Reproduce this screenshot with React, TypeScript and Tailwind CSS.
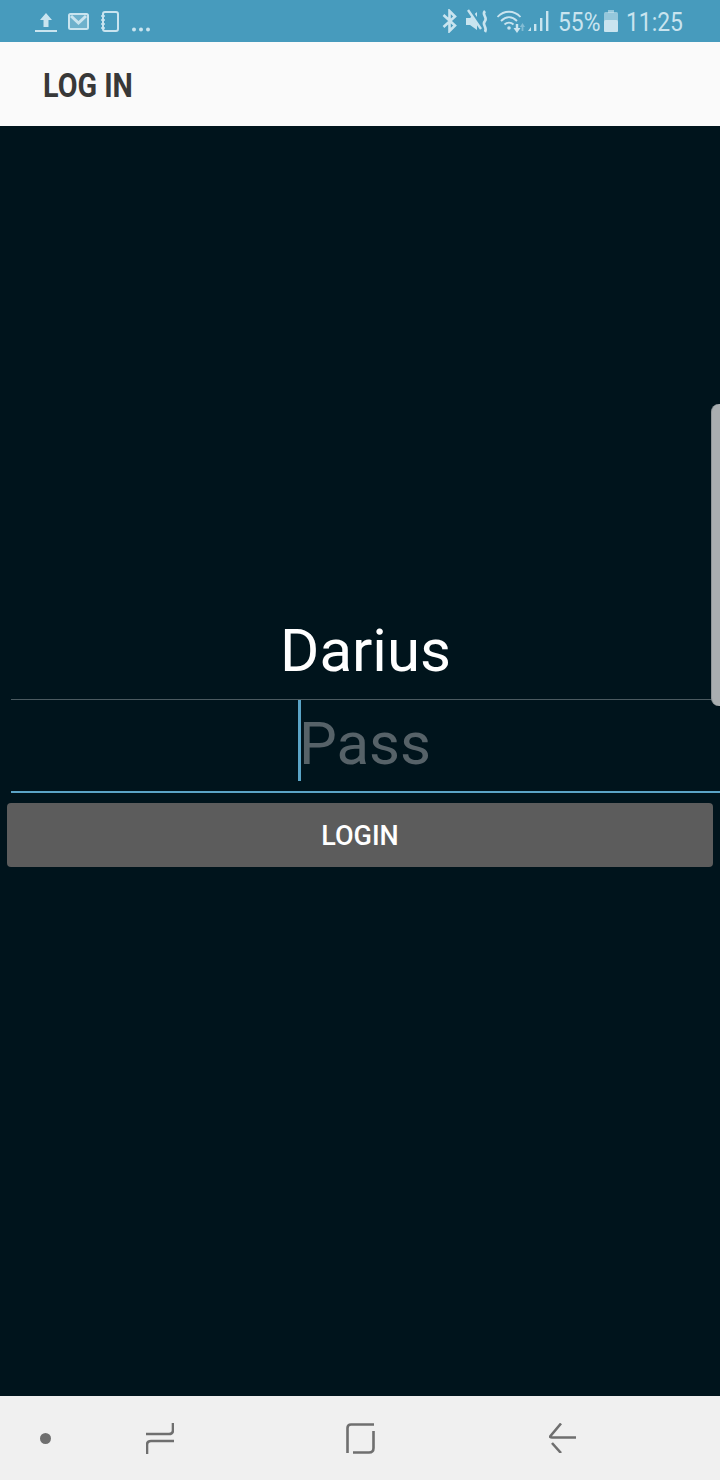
const statusColor = '#c9e4ef';

function UploadIcon() {
  return (
    <svg width="22" height="20" viewBox="0 0 22 20" className="mr-[11px] mt-[1px]">
      <path d="M11 1 L17 8 H13.500 V15 H8.500 V8 H5 Z" fill={statusColor} />
      <rect x="0" y="18" width="22" height="2" fill={statusColor} />
    </svg>
  );
}

function MailIcon() {
  return (
    <svg width="21" height="17" viewBox="0 0 21 17" className="mr-[12px]">
      <rect x="1" y="1" width="19" height="15" rx="1.500" fill={statusColor} fillOpacity="0.3" stroke={statusColor} strokeWidth="2" />
      <path d="M3 3 L10.500 10 L18 3" fill="none" stroke={statusColor} strokeWidth="3" />
    </svg>
  );
}

function NotebookIcon() {
  return (
    <svg width="18" height="21" viewBox="0 0 18 21" className="mr-[13px]">
      <rect x="2" y="1" width="15" height="19" rx="2" fill="none" stroke={statusColor} strokeWidth="2" />
      <path d="M0 5 H4 M0 9 H4 M0 13 H4 M0 17 H4" stroke={statusColor} strokeWidth="1.600" />
    </svg>
  );
}

function DotsIcon() {
  return (
    <svg width="18" height="5" viewBox="0 0 18 5" className="mt-[16px]">
      <circle cx="2" cy="2.500" r="2" fill={statusColor} />
      <circle cx="9" cy="2.500" r="2" fill={statusColor} />
      <circle cx="16" cy="2.500" r="2" fill={statusColor} />
    </svg>
  );
}

function BluetoothIcon() {
  return (
    <svg width="15" height="24" viewBox="0 0 15 24" className="mr-[9px]">
      <path d="M1.500 6 L13 16.500 L7.500 22 V2 L13 7.500 L1.500 18" fill="none" stroke={statusColor} strokeWidth="2.600" />
    </svg>
  );
}

function MuteIcon() {
  return (
    <svg width="23" height="24" viewBox="0 0 23 24" className="mr-[8px]">
      <path d="M0 9 H4 L11 3 V21 L4 16 H0 Z" fill={statusColor} />
      <path d="M3 0 L16 19" stroke="#479bbd" strokeWidth="4" />
      <path d="M2 1 L15 20" stroke={statusColor} strokeWidth="2.400" />
      <path d="M19 2 C15 6 22 8 19 12 C15 16 22 18 19 23" fill="none" stroke={statusColor} strokeWidth="2.600" />
    </svg>
  );
}

function WifiIcon() {
  return (
    <svg width="28" height="24" viewBox="0 0 28 24" className="mr-[3px]">
      <path d="M0.500 8 C7 1 17 1 23.500 8" fill="none" stroke={statusColor} strokeWidth="1.800" />
      <path d="M4 12 C9 7 15 7 20 12" fill="none" stroke={statusColor} strokeWidth="1.800" />
      <path d="M7.500 15.500 C10 13 14 13 16.500 15.500" fill="none" stroke={statusColor} strokeWidth="1.800" />
      <circle cx="12" cy="19" r="1.800" fill={statusColor} />
      <path d="M20 24 L16.500 19 H18.800 V15 H21.200 V19 H23.500 Z" fill={statusColor} />
      <path d="M25.500 14 L22.800 18 H24.600 V22 H26.400 V18 H28 Z" fill={statusColor} opacity="0.45" />
    </svg>
  );
}

function SignalIcon() {
  return (
    <svg width="21" height="22" viewBox="0 0 21 22" className="mr-[9px]">
      <path d="M0 21 L3 17 V21 Z" fill={statusColor} />
      <rect x="6" y="14" width="2.400" height="7" fill={statusColor} />
      <rect x="12" y="8" width="2.400" height="13" fill={statusColor} />
      <rect x="18" y="1" width="2.400" height="20" fill={statusColor} />
    </svg>
  );
}

function BatteryIcon() {
  return (
    <svg width="14" height="22" viewBox="0 0 14 22" className="ml-[4px] mr-[8px]">
      <rect x="4" y="0" width="6" height="3" fill={statusColor} opacity="0.6" />
      <rect x="0" y="2" width="14" height="20" rx="1.500" fill={statusColor} opacity="0.6" />
      <rect x="0" y="10" width="14" height="12" rx="1.500" fill={statusColor} />
    </svg>
  );
}

function RecentsIcon() {
  return (
    <svg width="28" height="31" viewBox="0 0 28 31" className="block">
      <path d="M27 0 V7 Q27 11 23 11 H0" fill="none" stroke="#6f6f6f" strokeWidth="2.600" />
      <path d="M1 31 V22 Q1 18 5 18 H28" fill="none" stroke="#6f6f6f" strokeWidth="2.600" />
    </svg>
  );
}

function HomeIcon() {
  return (
    <svg width="29" height="31" viewBox="0 0 29 31" className="block">
      <path d="M1.500 30 V5 Q1.500 1.500 5 1.500 H28" fill="none" stroke="#6f6f6f" strokeWidth="2.600" />
      <path d="M27.500 8 V25 Q27.500 29.500 23 29.500 H7" fill="none" stroke="#6f6f6f" strokeWidth="2.600" />
    </svg>
  );
}

function BackIcon() {
  return (
    <svg width="27" height="30" viewBox="0 0 27 30" className="block">
      <path d="M12 0.500 L1.500 13 Q0.500 14.500 3 14.500 H27" fill="none" stroke="#6f6f6f" strokeWidth="2.600" />
      <path d="M3 20 L12 30" fill="none" stroke="#6f6f6f" strokeWidth="2.600" />
    </svg>
  );
}

export default function App() {
  return (
    <div className="relative flex h-[1480px] w-[720px] flex-col overflow-hidden bg-[#00141c] font-['Roboto',sans-serif]">
      <div className="flex h-[42px] shrink-0 items-center justify-between bg-[#479bbd] pl-[35px] pr-[38px]">
        <div className="flex items-center">
          <UploadIcon />
          <MailIcon />
          <NotebookIcon />
          <DotsIcon />
        </div>
        <div className="flex items-center text-[26px] text-[#c9e4ef]">
          <BluetoothIcon />
          <MuteIcon />
          <WifiIcon />
          <SignalIcon />
          <span className="mt-[3px] w-[42px] origin-left scale-x-[0.88] whitespace-nowrap">55%</span>
          <BatteryIcon />
          <span className="mt-[3px] w-[56px] origin-left scale-x-[0.88] whitespace-nowrap">11:25</span>
        </div>
      </div>

      <div className="flex h-[84px] shrink-0 items-center bg-[#fafafa] pl-[43px] pt-[2px]">
        <h1 className="origin-left scale-x-[0.845] text-[34px] font-bold whitespace-nowrap text-[#383838]">LOG IN</h1>
      </div>

      <main className="flex flex-1 flex-col pt-[482px]">
        <div className="ml-[11px] flex h-[92px] items-center justify-center border-b border-[#4b5a60] pb-[6px] text-[60px] text-white">
          Darius
        </div>
        <div className="ml-[11px] flex h-[93px] items-start justify-center border-b-2 border-[#5ba4c6]">
          <div className="flex h-[81px] items-center">
            <span className="h-[81px] w-[3px] bg-[#5ba4c6]" />
            <span className="-ml-[2px] mr-[2px] pt-[7px] text-[60px] text-[#566268]">Pass</span>
          </div>
        </div>
        <button className="mx-[7px] mt-[10px] flex h-[64px] items-center justify-center rounded-[4px] bg-[#5c5c5c] pt-[2px] text-[27px] font-medium text-white">
          LOGIN
        </button>
      </main>

      {/* edge panel handle */}
      <div className="absolute right-0 top-[404px] h-[302px] w-[9px] rounded-l-[8px] border-l border-[#8e9597] bg-[#a9aeb0]" />

      <nav className="flex h-[84px] shrink-0 items-center bg-[#f0f0f0]">
        <span className="ml-[40px] h-[11px] w-[11px] rounded-full bg-[#6f6f6f]" />
        <div className="ml-[95px]"><RecentsIcon /></div>
        <div className="ml-[172px]"><HomeIcon /></div>
        <div className="ml-[174px]"><BackIcon /></div>
      </nav>
    </div>
  );
}
